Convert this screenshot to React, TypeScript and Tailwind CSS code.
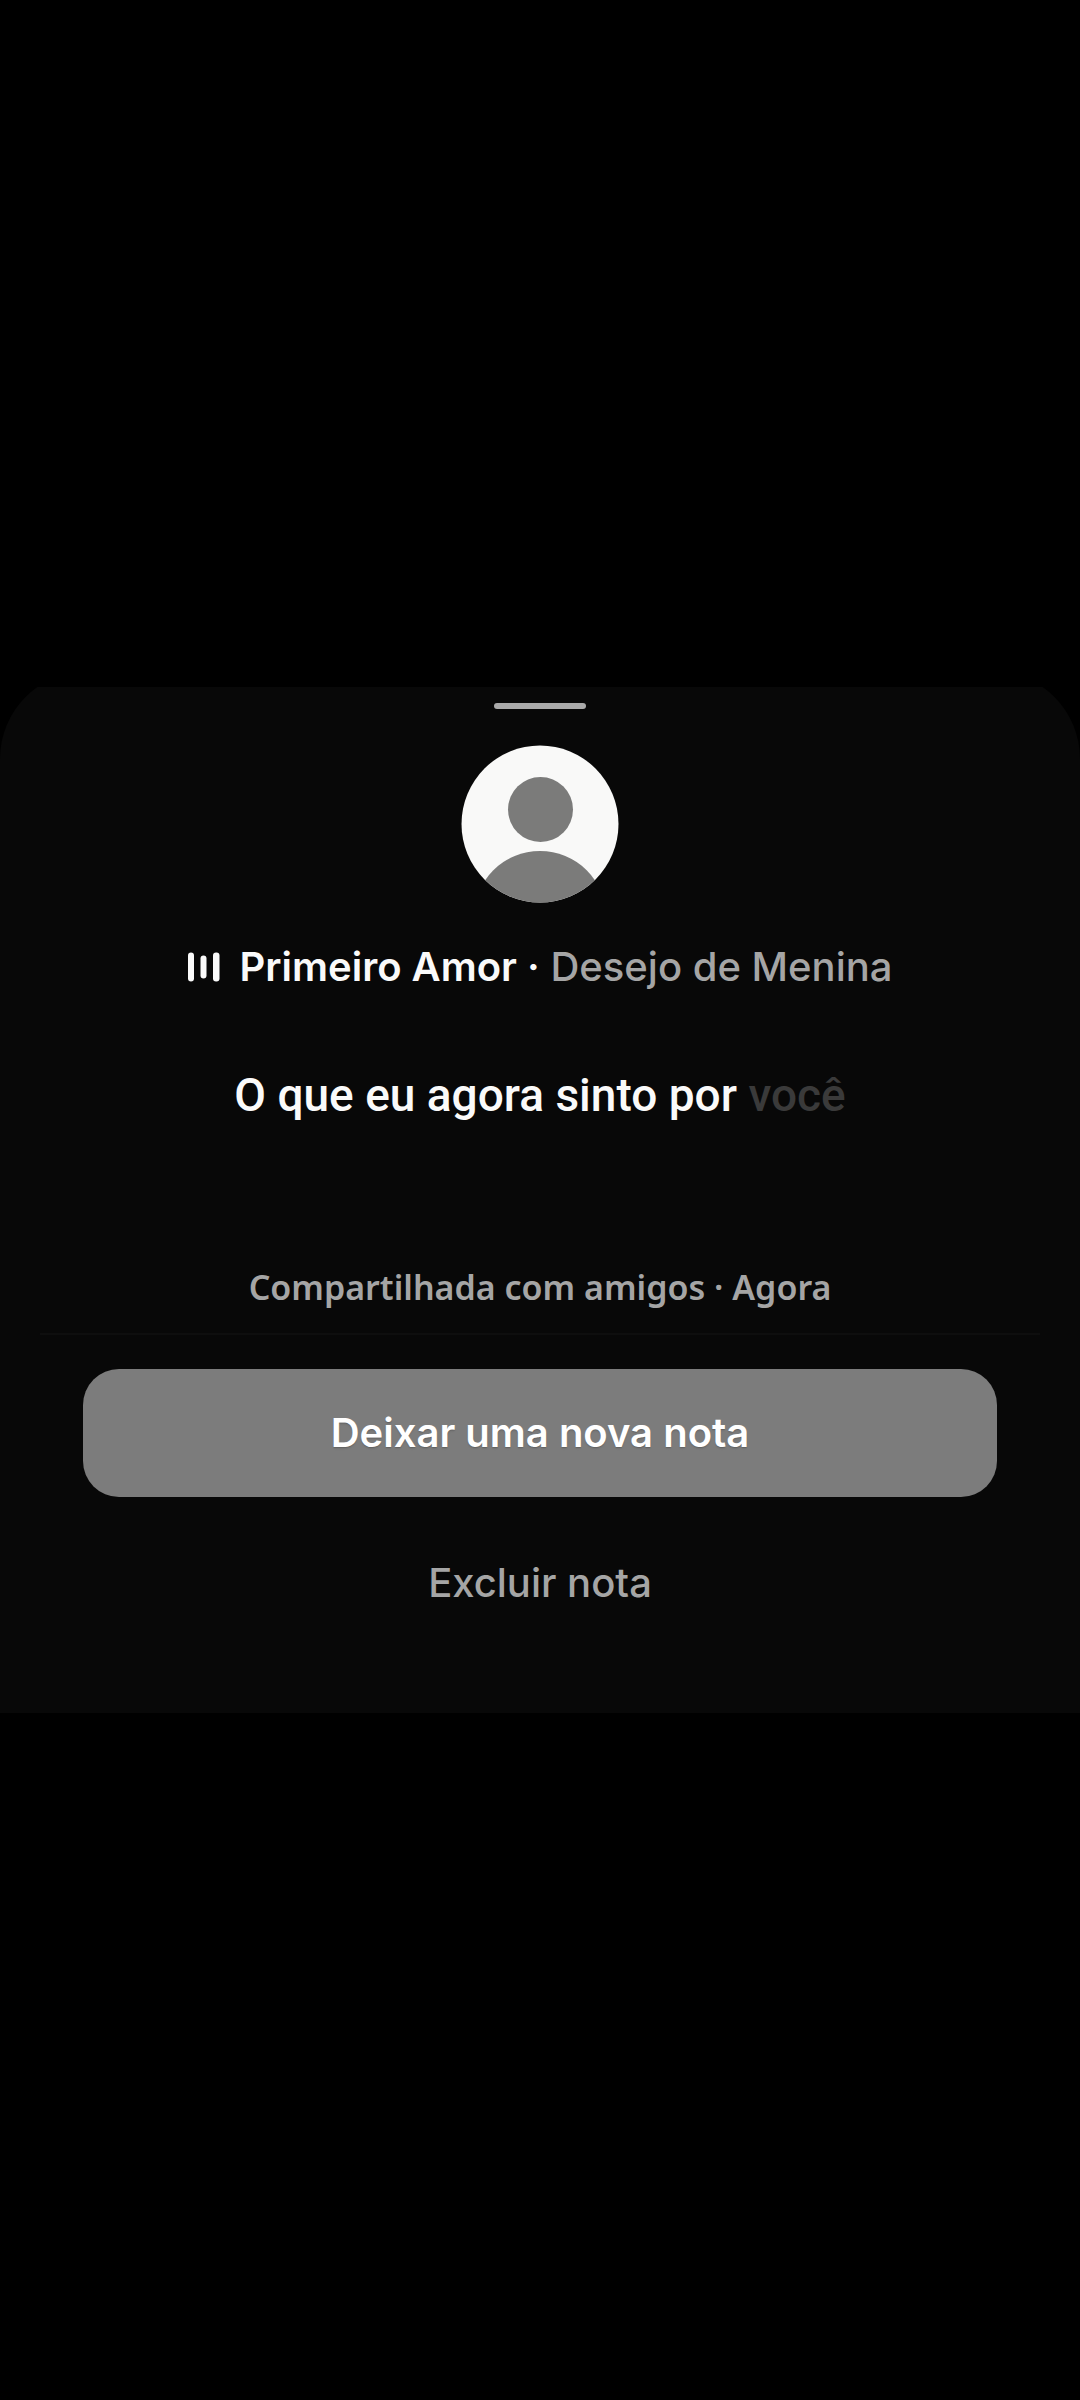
function DefaultAvatar() {
  return (
    <svg
      viewBox="0 0 158 158"
      className="size-[158px]"
      role="img"
      aria-label="Foto do perfil"
    >
      <clipPath id="avatar-clip">
        <circle cx="79" cy="79" r="78.5" />
      </clipPath>
      <g clipPath="url(#avatar-clip)">
        <rect width="158" height="158" fill="#f9f9f8" />
        <circle cx="79.5" cy="64.5" r="32.5" fill="#7b7b7a" />
        <circle cx="79" cy="172" r="66" fill="#7b7b7a" />
      </g>
    </svg>
  );
}

function SoundBars() {
  return (
    <svg viewBox="0 0 34 30" className="h-[30px] w-[34px]" aria-hidden="true">
      <g fill="#fafafa">
        <rect x="1" y="0.5" width="6" height="29" rx="3" />
        <rect x="13.5" y="3.5" width="6" height="23" rx="3" />
        <rect x="26" y="0.5" width="6.5" height="29" rx="3" />
      </g>
    </svg>
  );
}

export default function App() {
  return (
    <div className="flex min-h-screen flex-col justify-center bg-black font-['Inter',sans-serif]">
      <main className="overflow-hidden">
        <div className="-mt-4 flex flex-col items-center rounded-t-[88px] bg-[#080808] pt-8 pb-[66px]">
          {/* Drag handle */}
          <div className="h-[6px] w-[92px] rounded-full bg-[#aaaaaa]" />

          <div className="mt-9">
            <DefaultAvatar />
          </div>

          {/* Song */}
          <div className="mt-10 flex items-center gap-[18px]">
            <SoundBars />
            <p className="text-[40px] leading-12 font-medium whitespace-nowrap text-[#a5a5a5]">
              <span className="font-semibold text-[#fafafa]">Primeiro Amor ·</span> Desejo de Menina
            </p>
          </div>

          {/* Lyrics */}
          <p className="mt-20 font-['Roboto',sans-serif] text-[46px] leading-12 font-medium whitespace-nowrap text-[#fafafa]">
            O que eu agora sinto por <span className="text-[#3a3a3a]">você</span>
          </p>

          <p className="mt-36 font-['Noto_Sans',sans-serif] text-[34px] leading-12 font-semibold whitespace-nowrap text-[#a5a5a5]">
            Compartilhada com amigos · Agora
          </p>

          <div className="w-full px-10">
            <hr className="mt-[22px] border-t-2 border-[#0e0e0e]" />
          </div>

          {/* Actions */}
          <div className="mt-[34px] flex w-full flex-col gap-[22px] px-[83px]">
            <button
              type="button"
              className="h-32 rounded-[36px] bg-[#7c7c7c] text-[40px] leading-12 font-semibold text-white text-shadow-sm"
            >
              Deixar uma nova nota
            </button>
            <button
              type="button"
              className="h-32 rounded-[36px] text-[40px] leading-12 font-medium text-[#a5a5a5]"
            >
              Excluir nota
            </button>
          </div>
        </div>
      </main>
    </div>
  );
}
